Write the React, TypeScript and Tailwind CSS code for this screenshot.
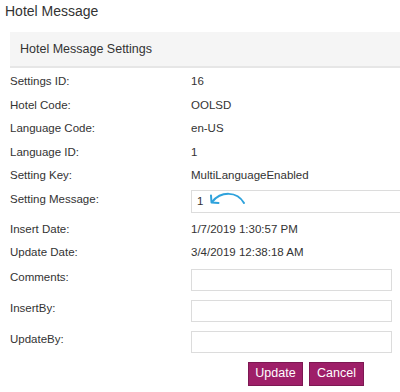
export default function App() {
    const info: [string, string][] = [
        ["Settings ID:", "16"],
        ["Hotel Code:", "OOLSD"],
        ["Language Code:", "en-US"],
        ["Language ID:", "1"],
        ["Setting Key:", "MultiLanguageEnabled"],
    ];

    return (
        <main className="w-[400px] h-[392px] overflow-hidden bg-white text-[#333] font-['Liberation_Sans',Arial,sans-serif]">
            <h1 className="pl-[5px] pt-[3px] h-[32px] text-[14px] leading-[16px]">Hotel Message</h1>

            <section className="ml-[10px]">
                <header className="h-[36px] flex items-center pl-[10px] bg-[#f5f5f5] border-b-2 border-[#e6e6e6] text-[12.5px]">
                    Hotel Message Settings
                </header>

                <div className="flex flex-col text-[11.5px] pt-[2px]">
                    {info.map(([label, value]) => (
                        <div key={label} className="flex items-center h-[23.5px]">
                            <div className="w-[181px] shrink-0">{label}</div>
                            <div>{value}</div>
                        </div>
                    ))}

                    <div className="flex items-center mt-[2px]">
                        <div className="w-[181px] shrink-0 -mt-[3px]">Setting Message:</div>
                        <div className="relative shrink-0">
                            <input
                                type="text"
                                defaultValue="1"
                                className="w-[240px] h-[23px] border border-[#dcdcdc] px-[5px] text-[11.5px] outline-none"
                            />
                            <svg className="absolute left-[16px] top-[2px]" width="40" height="16" viewBox="0 0 40 16" fill="none">
                                <path d="M37 11 C 30 -1, 14 -1, 5 10" stroke="#2ea2dc" strokeWidth="2" strokeLinecap="round" />
                                <path d="M4 3.5 L 4.5 10.5 L 11.5 11" stroke="#2ea2dc" strokeWidth="2" strokeLinecap="round" strokeLinejoin="round" />
                            </svg>
                        </div>
                    </div>

                    <div className="flex items-center h-[23.5px] mt-[5px]">
                        <div className="w-[181px] shrink-0">Insert Date:</div>
                        <div>1/7/2019 1:30:57 PM</div>
                    </div>
                    <div className="flex items-center h-[23.5px]">
                        <div className="w-[181px] shrink-0">Update Date:</div>
                        <div>3/4/2019 12:38:18 AM</div>
                    </div>

                    {["Comments:", "InsertBy:", "UpdateBy:"].map((label, i) => (
                        <div key={label} className={"flex items-start " + (i === 0 ? "mt-[4px]" : "mt-[9px]")}>
                            <div className="w-[181px] shrink-0">{label}</div>
                            <input type="text" className="w-[201px] h-[22px] border border-[#dcdcdc] outline-none" />
                        </div>
                    ))}

                    <div className="flex gap-[6px] pl-[238px] mt-[9px]">
                        <button className="w-[55px] h-[24px] bg-[#9e1f68] border border-[#7d1852] text-white text-[12.5px]">Update</button>
                        <button className="w-[55px] h-[24px] bg-[#9e1f68] border border-[#7d1852] text-white text-[12.5px]">Cancel</button>
                    </div>
                </div>
            </section>
        </main>
    );
}
